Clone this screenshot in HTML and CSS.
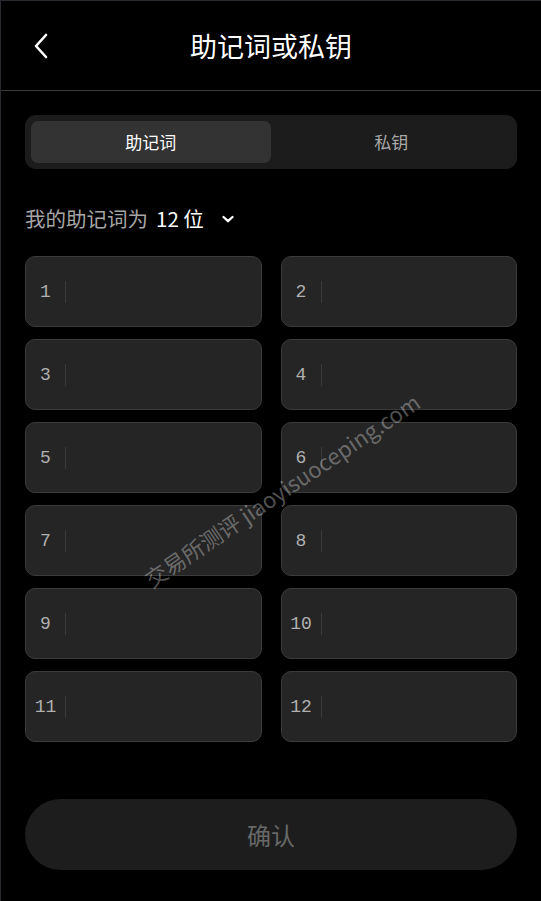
FILE: index.html
```html
<!DOCTYPE html>
<html lang="zh-CN">
<head>
  <meta charset="UTF-8" />
  <meta name="viewport" content="width=device-width, initial-scale=1.0" />
  <title>助记词或私钥</title>
  <link rel="stylesheet" href="styles.css">
</head>
<body>
  <div class="page">
    <header class="topbar">
      <button class="back" aria-label="返回">
        <svg width="16" height="26" viewBox="0 0 16 26"><path d="M13 2 L3 13 L13 24" fill="none" stroke="#fff" stroke-width="2.6" stroke-linecap="round" stroke-linejoin="round"/></svg>
      </button>
      <h1>助记词或私钥</h1>
    </header>

    <main class="content">
      <div class="tabs">
        <div class="tab active">助记词</div>
        <div class="tab">私钥</div>
      </div>

      <div class="count">
        我的助记词为 <b>12 位</b>
        <svg class="caret" width="14" height="10" viewBox="0 0 14 10"><path d="M2.5 3 L7 7.2 L11.5 3" fill="none" stroke="#fff" stroke-width="2.3" stroke-linecap="round" stroke-linejoin="round"/></svg>
      </div>

      <div class="words">
        <label class="word"><span class="num">1</span><input type="text"></label>
        <label class="word"><span class="num">2</span><input type="text"></label>
        <label class="word"><span class="num">3</span><input type="text"></label>
        <label class="word"><span class="num">4</span><input type="text"></label>
        <label class="word"><span class="num">5</span><input type="text"></label>
        <label class="word"><span class="num">6</span><input type="text"></label>
        <label class="word"><span class="num">7</span><input type="text"></label>
        <label class="word"><span class="num">8</span><input type="text"></label>
        <label class="word"><span class="num">9</span><input type="text"></label>
        <label class="word"><span class="num">10</span><input type="text"></label>
        <label class="word"><span class="num">11</span><input type="text"></label>
        <label class="word"><span class="num">12</span><input type="text"></label>
      </div>

      <button class="confirm" disabled>确认</button>
    </main>

    <div class="mark">交易所测评 jiaoyisuoceping.com</div>
  </div>
</body>
</html>
```

FILE: styles.css
```css
* {
  box-sizing: border-box;
}
html, body {
  margin: 0;
  background: #000;
}
body {
  font-family: "Noto Sans CJK SC", "Noto Sans", sans-serif;
  color: #fff;
}
.page {
  position: relative;
  width: 541px;
  height: 901px;
  border-top: 1px solid #2a2a30;
  border-left: 1px solid #2a2a30;
  overflow: hidden;
}
.topbar {
  height: 90px;
  display: flex;
  align-items: center;
  justify-content: center;
  position: relative;
  border-bottom: 1px solid #3a3a3a;
}
.topbar h1 {
  margin: 0;
  font-size: 27px;
  font-weight: 400;
}
.back {
  position: absolute;
  left: 32px;
  top: 32px;
  background: none;
  border: 0;
  padding: 0;
  display: flex;
}
.content {
  padding: 24px 24px 0;
}
.tabs {
  display: flex;
  height: 54px;
  padding: 6px;
  background: #1c1c1c;
  border-radius: 11px;
}
.tab {
  flex: 1;
  display: flex;
  align-items: center;
  justify-content: center;
  font-size: 17px;
  color: #a8a8a8;
  border-radius: 7px;
  padding-bottom: 2px;
}
.tab.active {
  background: #333;
  color: #fff;
  margin-right: 1px;
}
.count {
  margin-top: 35px;
  display: flex;
  align-items: center;
  font-size: 20.5px;
  color: #a6a6a6;
  height: 28px;
}
.count b {
  color: #fff;
  font-weight: 400;
  margin-left: 8px;
}
.caret {
  margin-left: 17px;
  margin-top: 2px;
}
.words {
  margin-top: 24px;
  display: grid;
  grid-template-columns: minmax(0, 1fr) minmax(0, 1fr);
  column-gap: 19px;
  row-gap: 12px;
}
.word {
  height: 71px;
  display: flex;
  align-items: center;
  background: #252525;
  border: 1px solid #3b3b3b;
  border-radius: 10px;
}
.num {
  font-family: "Liberation Mono", "DejaVu Sans Mono", monospace;
  font-size: 18px;
  color: #b0b0b0;
  width: 40px;
  padding-left: 1px;
  padding-right: 1px;
  text-align: center;
  border-right: 1px solid #3a3a3a;
  line-height: 22px;
  margin-right: 8px;
}
.word input {
  flex: 1;
  min-width: 0;
  width: 100%;
  background: transparent;
  border: 0;
  outline: none;
  color: #fff;
  font-size: 16px;
}
.confirm {
  display: block;
  width: 100%;
  height: 71px;
  margin-top: 57px;
  border: 0;
  border-radius: 36px;
  background: #1d1d1d;
  color: #686868;
  font-family: inherit;
  font-size: 24px;
}
.mark {
  position: absolute;
  left: 118px;
  top: 474px;
  width: 320px;
  text-align: center;
  font-size: 22px;
  color: rgba(255, 255, 255, 0.32);
  transform: rotate(-34deg);
  pointer-events: none;
  white-space: nowrap;
}
```
